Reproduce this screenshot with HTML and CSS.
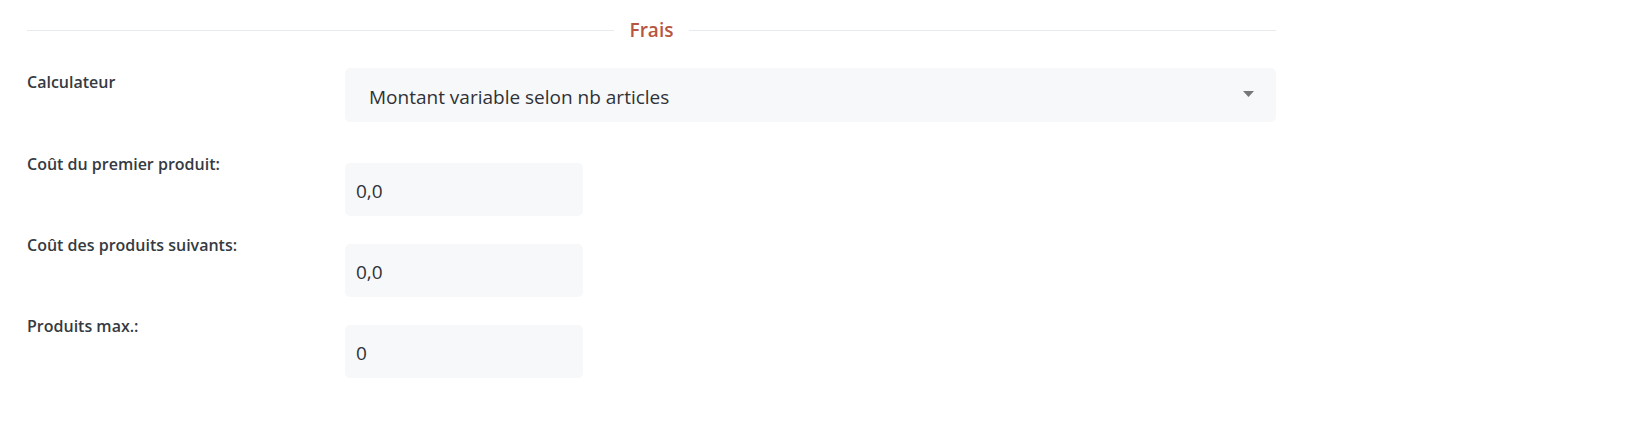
FILE: index.html
```html
<!DOCTYPE html>
<html lang="fr">
<head>
<meta charset="utf-8">
<title>Frais</title>
<link rel="stylesheet" href="styles.css">
</head>
<body>
<div class="panel">
  <div class="section-title"><span class="section-title__text">Frais</span></div>

  <div class="row row--select">
    <label class="row__label row__label--select" for="calc">Calculateur</label>
    <div class="select-wrap">
      <select id="calc" class="select">
        <option>Montant variable selon nb articles</option>
      </select>
      <svg class="select-arrow" width="11" height="6" viewBox="0 0 11 6" aria-hidden="true"><path d="M0 0 H11 L5.5 6 Z" fill="#777"/></svg>
    </div>
  </div>

  <div class="row">
    <label class="row__label" for="c1">Coût du premier produit:</label>
    <input id="c1" class="field" type="text" value="0,0">
  </div>

  <div class="row">
    <label class="row__label" for="c2">Coût des produits suivants:</label>
    <input id="c2" class="field" type="text" value="0,0">
  </div>

  <div class="row">
    <label class="row__label" for="c3">Produits max.:</label>
    <input id="c3" class="field" type="text" value="0">
  </div>
</div>
</body>
</html>
```

FILE: styles.css
```css
* { box-sizing: border-box; }

html, body {
  margin: 0;
  padding: 0;
  background: #ffffff;
  font-family: "Open Sans", "Noto Sans", "Liberation Sans", sans-serif;
  color: #363a41;
}

.panel {
  display: flex;
  flex-direction: column;
  width: 1276px;
  padding: 16px 0 0 27px;
}

.section-title {
  display: flex;
  align-items: center;
  gap: 16px;
  height: 28px;
}

.section-title::before,
.section-title::after {
  content: "";
  flex: 1 1 0;
  height: 1px;
  background: #e8ebee;
}

.section-title__text {
  font-size: 19px;
  font-weight: 600;
  color: #b8553f;
  line-height: 28px;
}

.row {
  display: flex;
  align-items: flex-start;
  margin-top: 18px;
}

.row--select {
  margin-top: 24px;
  margin-bottom: 13px;
}

.row__label {
  width: 318px;
  flex: none;
  font-size: 16px;
  font-weight: 600;
  line-height: 22px;
  color: #363a41;
}

.row__label--select { margin-top: 3px; }

.select-wrap {
  position: relative;
  flex: 1;
}

.select {
  display: block;
  width: 100%;
  height: 54px;
  padding: 3px 40px 0 24px;
  border: 0;
  border-radius: 5px;
  background: #f7f8f9;
  font-family: inherit;
  font-size: 19px;
  color: #2f3237;
  appearance: none;
  -webkit-appearance: none;
  outline: none;
}

.select-arrow {
  position: absolute;
  right: 22px;
  top: 23px;
}

.field {
  display: block;
  width: 238px;
  height: 53px;
  margin-top: 10px;
  padding: 3px 11px 0;
  border: 0;
  border-radius: 5px;
  background: #f7f8f9;
  font-family: inherit;
  font-size: 19px;
  color: #2f3237;
  outline: none;
}
```
